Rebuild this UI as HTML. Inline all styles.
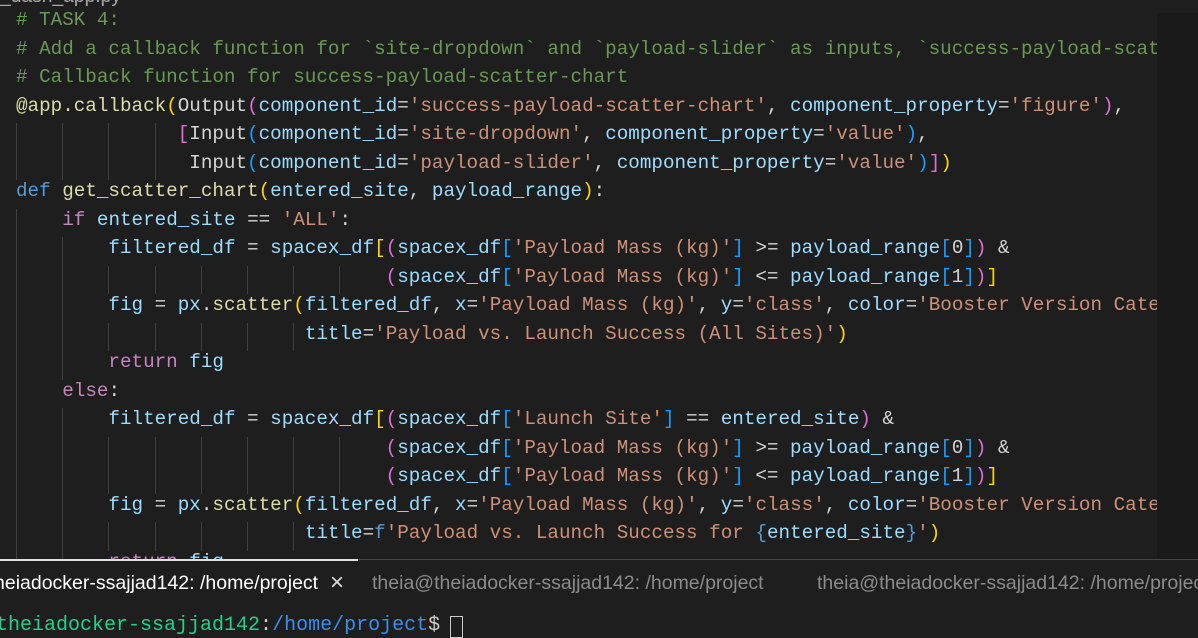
<!DOCTYPE html>
<html><head><meta charset="utf-8"><style>
html,body{margin:0;padding:0;background:#1e1e1e;width:1198px;height:638px;overflow:hidden;position:relative}
#ed{position:absolute;left:0;top:0;width:1157px;height:559px;overflow:hidden}
.l{position:absolute;left:16px;height:28px;line-height:28px;font:19.25px "Liberation Mono",monospace;color:#d4d4d4;white-space:pre;margin-top:3px}
.g{position:absolute;width:1px;background:#404040;height:28.6px}
.c{color:#6a9955}.f{color:#dcdcaa}.p{color:#9cdcfe}.s{color:#ce9178}.k{color:#569cd6}.m{color:#c586c0}
.b1{color:#ffd700}.b2{color:#da70d6}.b3{color:#179fff}
#mm{position:absolute;left:1157px;top:13px;width:41px;height:546px;background:#1a1a1a}
#term{position:absolute;left:0;top:559px;width:1198px;height:79px;background:#1e1e1e;border-top:1px solid #444}
.tab{position:absolute;top:12px;font:19.5px "Liberation Sans",sans-serif;color:#8b8b8b;white-space:pre}
.pr{position:absolute;left:-4px;top:54px;font:20px "Liberation Mono",monospace;white-space:pre;color:#ccc}
</style></head><body>
<div id="ed">
<div class="l" style="top:-17px;left:0;font-family:'Liberation Sans',sans-serif;color:#aaa">_dash_app.py</div>
<div class="l" style="top:6px"><span class="c"># TASK 4:</span></div>
<div class="l" style="top:34.5px"><span class="c"># Add a callback function for `site-dropdown` and `payload-slider` as inputs, `success-payload-scatter-chart` as output</span></div>
<div class="l" style="top:63px"><span class="c"># Callback function for success-payload-scatter-chart</span></div>
<div class="l" style="top:91.5px"><span class="f">@app.callback</span><span class="b1">(</span>Output<span class="b2">(</span><span class="p">component_id</span>=<span class="s">'success-payload-scatter-chart'</span>, <span class="p">component_property</span>=<span class="s">'figure'</span><span class="b2">)</span>,</div>
<div class="l" style="top:120px">              <span class="b2">[</span>Input<span class="b3">(</span><span class="p">component_id</span>=<span class="s">'site-dropdown'</span>, <span class="p">component_property</span>=<span class="s">'value'</span><span class="b3">)</span>,</div>
<div class="l" style="top:148.5px">               Input<span class="b3">(</span><span class="p">component_id</span>=<span class="s">'payload-slider'</span>, <span class="p">component_property</span>=<span class="s">'value'</span><span class="b3">)</span><span class="b2">]</span><span class="b1">)</span></div>
<div class="l" style="top:177px"><span class="k">def</span> <span class="f">get_scatter_chart</span><span class="b1">(</span><span class="p">entered_site</span>, <span class="p">payload_range</span><span class="b1">)</span>:</div>
<div class="l" style="top:205.5px">    <span class="m">if</span> <span class="p">entered_site</span> == <span class="s">'ALL'</span>:</div>
<div class="l" style="top:234px">        <span class="p">filtered_df</span> = <span class="p">spacex_df</span><span class="b1">[</span><span class="b2">(</span><span class="p">spacex_df</span><span class="b3">[</span><span class="s">'Payload Mass (kg)'</span><span class="b3">]</span> &gt;= <span class="p">payload_range</span><span class="b3">[</span>0<span class="b3">]</span><span class="b2">)</span> &amp;</div>
<div class="l" style="top:262.5px">                                <span class="b2">(</span><span class="p">spacex_df</span><span class="b3">[</span><span class="s">'Payload Mass (kg)'</span><span class="b3">]</span> &lt;= <span class="p">payload_range</span><span class="b3">[</span>1<span class="b3">]</span><span class="b2">)</span><span class="b1">]</span></div>
<div class="l" style="top:291px">        <span class="p">fig</span> = <span class="p">px</span>.<span class="f">scatter</span><span class="b1">(</span><span class="p">filtered_df</span>, <span class="p">x</span>=<span class="s">'Payload Mass (kg)'</span>, <span class="p">y</span>=<span class="s">'class'</span>, <span class="p">color</span>=<span class="s">'Booster Version Category'</span>,</div>
<div class="l" style="top:319.5px">                         <span class="p">title</span>=<span class="s">'Payload vs. Launch Success (All Sites)'</span><span class="b1">)</span></div>
<div class="l" style="top:348px">        <span class="m">return</span> <span class="p">fig</span></div>
<div class="l" style="top:376.5px">    <span class="m">else</span>:</div>
<div class="l" style="top:405px">        <span class="p">filtered_df</span> = <span class="p">spacex_df</span><span class="b1">[</span><span class="b2">(</span><span class="p">spacex_df</span><span class="b3">[</span><span class="s">'Launch Site'</span><span class="b3">]</span> == <span class="p">entered_site</span><span class="b2">)</span> &amp;</div>
<div class="l" style="top:433.5px">                                <span class="b2">(</span><span class="p">spacex_df</span><span class="b3">[</span><span class="s">'Payload Mass (kg)'</span><span class="b3">]</span> &gt;= <span class="p">payload_range</span><span class="b3">[</span>0<span class="b3">]</span><span class="b2">)</span> &amp;</div>
<div class="l" style="top:462px">                                <span class="b2">(</span><span class="p">spacex_df</span><span class="b3">[</span><span class="s">'Payload Mass (kg)'</span><span class="b3">]</span> &lt;= <span class="p">payload_range</span><span class="b3">[</span>1<span class="b3">]</span><span class="b2">)</span><span class="b1">]</span></div>
<div class="l" style="top:490.5px">        <span class="p">fig</span> = <span class="p">px</span>.<span class="f">scatter</span><span class="b1">(</span><span class="p">filtered_df</span>, <span class="p">x</span>=<span class="s">'Payload Mass (kg)'</span>, <span class="p">y</span>=<span class="s">'class'</span>, <span class="p">color</span>=<span class="s">'Booster Version Category'</span>,</div>
<div class="l" style="top:519px">                         <span class="p">title</span>=<span class="k">f</span><span class="s">'Payload vs. Launch Success for </span><span class="k">{</span><span class="p">entered_site</span><span class="k">}</span><span class="s">'</span><span class="b1">)</span></div>
<div class="l" style="top:547.5px">        <span class="m">return</span> <span class="p">fig</span></div>
</div>
<div id="mm"></div>
<div id="term">
<div style="position:absolute;left:0;top:-1px;width:358px;height:2px;background:#e0e0e0"></div>
<div class="tab" style="left:-6px;color:#fff">heiadocker-ssajjad142: /home/project</div>
<div class="tab" style="left:330px;color:#ddd;font-size:24px;top:9px">×</div>
<div class="tab" style="left:372px">theia@theiadocker-ssajjad142: /home/project</div>
<div class="tab" style="left:817px">theia@theiadocker-ssajjad142: /home/project</div>
<div class="pr"><span style="color:#23d18b">theiadocker-ssajjad142</span>:<span style="color:#3b8eea">/home/project</span>$ </div>
<div style="position:absolute;left:450px;top:56px;width:11px;height:20px;border:1px solid #ccc"></div>
</div>
<script>
(function(){
var ls=document.querySelectorAll('#ed .l'),ed=document.getElementById('ed');
for(var i=1;i<ls.length;i++){var t=ls[i].textContent,n=t.length-t.replace(/^ +/,'').length;
var yy=parseFloat(ls[i].style.top)+3;
for(var c=0;c<n;c+=4){var d=document.createElement('div');d.className='g';d.style.left=(16+c*11.55)+'px';d.style.top=yy+'px';ed.insertBefore(d,ed.firstChild);}}
})();
</script>
</body></html>
